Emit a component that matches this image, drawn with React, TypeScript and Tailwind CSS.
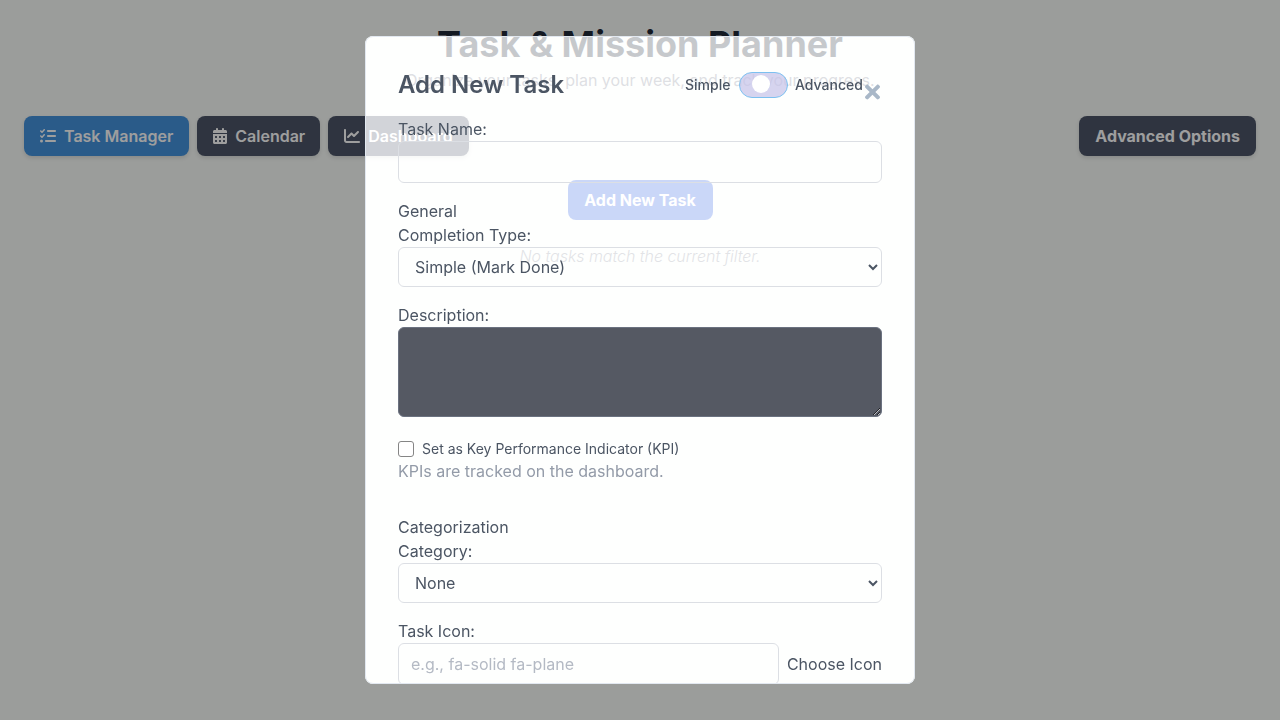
import { FaTimes } from "react-icons/fa";
import { FaCalendarDays, FaChartLine, FaListCheck } from "react-icons/fa6";

const navButton =
  "flex h-10 items-center gap-2 rounded-lg px-4 text-base font-semibold whitespace-nowrap text-white shadow-[0_2px_4px_rgba(0,0,0,0.12)]";
const labelText = "block h-6 text-base leading-6 text-[#4b5563]";
const fieldBox = "block rounded-md border border-[#dcdfe4] bg-transparent";

const Nav = () => (
  <nav className="mt-6 flex items-center justify-between px-6">
    <div className="flex gap-2">
      <button className={`${navButton} bg-[#4493de]`}>
        <FaListCheck className="h-4 w-4" />
        Task Manager
      </button>
      <button className={`${navButton} w-[123px] bg-[#4c5568]`}>
        <FaCalendarDays className="h-4 w-[14px] shrink-0" />
        <span className="w-[69px]">Calendar</span>
      </button>
      <button className={`${navButton} bg-[#4c5568]`}>
        <FaChartLine className="h-4 w-4" />
        Dashboard
      </button>
    </div>
    <button className="h-10 rounded-lg bg-[#4c5568] px-4 text-base font-bold text-white shadow-[0_2px_4px_rgba(0,0,0,0.12)]">
      Advanced Options
    </button>
  </nav>
);

const TaskModal = () => (
  <div className="fixed inset-0 flex items-center justify-center">
    <div className="h-[648px] w-[550px] overflow-hidden rounded-lg border border-[#e2e8f0] bg-white/75 px-8 pt-8 shadow-[0_0_0_2000px_rgba(0,0,0,0.38)]">
      <div className="relative flex items-center justify-between pr-5">
        <h2 className="text-2xl font-semibold text-[#4b5563]">Add New Task</h2>
        <div className="flex items-center text-sm font-medium text-[#4b5563]">
          <span className="mr-2 w-[46px]">Simple</span>
          <span className="mr-[7px] flex h-[26px] w-[49px] items-center rounded-full border border-[#7cc0f0] bg-[#c4c2e8]/70 pb-0.5 pl-[12px]">
            <span className="h-[18px] w-[18px] rounded-full bg-white" />
          </span>
          <span className="w-[67px] whitespace-nowrap">Advanced</span>
        </div>
        <FaTimes className="absolute top-[12px] right-[2px] h-[22px] w-[15px] text-[#a9b8c8]" />
      </div>
      <label className={`${labelText} mt-4`}>Task Name:</label>
      <input className={`${fieldBox} h-[42px] w-full`} />
      <div className="mt-4 h-6 text-base leading-6 text-[#4b5563]">General</div>
      <label className={labelText}>Completion Type:</label>
      <select className={`${fieldBox} h-10 w-full px-3 text-base text-[#4b5563]`}>
        <option>Simple (Mark Done)</option>
      </select>
      <label className={`${labelText} mt-4`}>Description:</label>
      <textarea className="block h-[90px] w-full rounded-md border border-[#6b7280] bg-[#555963]" />
      <div className="mt-[22px] flex h-5 items-center gap-2 text-sm text-[#4b5563]">
        <input
          type="checkbox"
          className="h-4 w-4 appearance-none rounded-[3px] border border-[#858585] bg-white"
        />
        Set as Key Performance Indicator (KPI)
      </div>
      <p className="text-base leading-6 text-[#939ba8]">KPIs are tracked on the dashboard.</p>
      <div className="mt-8 h-6 text-base leading-6 text-[#4b5563]">Categorization</div>
      <label className={labelText}>Category:</label>
      <select className={`${fieldBox} h-10 w-full px-3 text-base text-[#4b5563]`}>
        <option>None</option>
      </select>
      <label className={`${labelText} mt-4`}>Task Icon:</label>
      <div className="flex items-center gap-2">
        <input
          className={`${fieldBox} h-[42px] flex-1 px-3 text-base placeholder:text-[#b4bac4]`}
          placeholder="e.g., fa-solid fa-plane"
        />
        <span className="text-base text-[#4b5563]">Choose Icon</span>
      </div>
    </div>
  </div>
);

const App = () => (
  <div className="h-[720px] overflow-hidden bg-[#fafdfa] font-['Inter',sans-serif]">
    <h1 className="pt-5 text-center text-4xl leading-12 font-bold text-[#1f2937]">
      Task &amp; Mission Planner
    </h1>
    <p className="text-center text-base leading-6 text-[#7b8290]">
      Organize your tasks, plan your week, and track your progress.
    </p>
    <Nav />
    <div className="mt-6 flex justify-center">
      <button className="h-10 w-[145px] rounded-lg bg-[#2f62e4] text-base font-bold text-white">
        Add New Task
      </button>
    </div>
    <p className="mt-6 text-center text-base font-light tracking-[-0.05px] text-[#8b919c] italic">
      No tasks match the current filter.
    </p>
    <TaskModal />
  </div>
);

export default App;
